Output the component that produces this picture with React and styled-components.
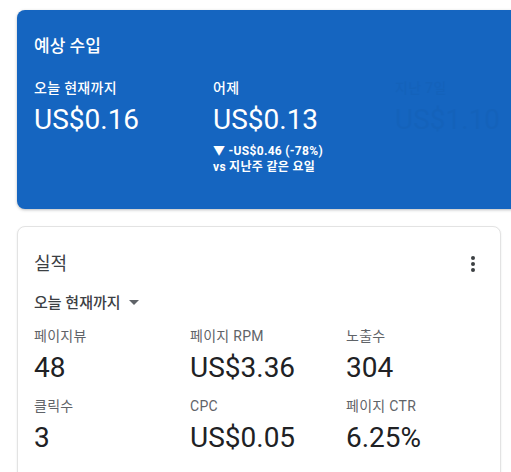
import React from 'react';
import styled, { createGlobalStyle } from 'styled-components';

const GlobalStyle = createGlobalStyle`
  body {
    margin: 0;
    background: #fff;
    overflow: hidden;
    font-family: Roboto, "Noto Sans CJK KR", sans-serif;
  }
`;

const Page = styled.div`
  padding: 10px 10px 0 17px;
  display: flex;
  flex-direction: column;
  gap: 17px;
`;

const EarningsCard = styled.section`
  background: #1565c0;
  border-radius: 8px 0 0 8px;
  margin-right: -20px;
  height: 199px;
  box-sizing: border-box;
  padding: 24px 17px 0;
  color: #fff;
  box-shadow: 0 1px 3px rgba(60, 64, 67, 0.35);
`;

const CardTitle = styled.h2`
  margin: 0;
  line-height: 24px;
  color: ${(p) => (p.$light ? '#fff' : '#3c4043')};
  font-size: ${(p) => (p.$light ? '17px' : '18px')};
  font-weight: ${(p) => (p.$light ? 500 : 400)};
`;

const EarningsRow = styled.div`
  display: grid;
  grid-template-columns: 179px 182px 1fr;
  margin-top: 20px;
`;

const EarningsCol = styled.div`
  display: flex;
  flex-direction: column;
  opacity: ${(p) => (p.$ghost ? 0.025 : 1)};
  color: ${(p) => (p.$ghost ? '#000' : '#fff')};
`;

const EarnLabel = styled.div`
  font-size: 14px;
  font-weight: 500;
  line-height: 20px;
  letter-spacing: 0.3px;
`;

const EarnValue = styled.div`
  font-size: 28px;
  line-height: 36px;
  font-weight: 400;
  margin-top: 4px;
`;

const Change = styled.div`
  font-size: 12px;
  font-weight: 700;
  line-height: 16px;
  margin-top: 5px;
  letter-spacing: 0.3px;
`;

const PerfCard = styled.section`
  background: #fff;
  border: 1px solid #e3e3e3;
  border-radius: 8px;
  box-shadow: 0 1px 2px rgba(60, 64, 67, 0.12);
  padding: 25px 16px 30px;
  box-sizing: border-box;
  height: 260px;
`;

const Header = styled.div`
  display: flex;
  justify-content: space-between;
  align-items: center;
`;

const Kebab = styled.button`
  border: none;
  background: none;
  padding: 0;
  margin-right: 9px;
  display: flex;
  color: #3c4043;
`;

const Dropdown = styled.div`
  display: flex;
  align-items: center;
  gap: 8px;
  margin-top: 17px;
  font-size: 15px;
  font-weight: 500;
  line-height: 20px;
  color: #3c4043;
`;

const Caret = styled.span`
  width: 0;
  height: 0;
  border-left: 5px solid transparent;
  border-right: 5px solid transparent;
  border-top: 5px solid #5f6368;
  margin-top: -2px;
`;

const MetricsGrid = styled.div`
  display: grid;
  grid-template-columns: 156px 156px 1fr;
  row-gap: 11px;
  margin-top: 14px;
`;

const Metric = styled.div`
  display: flex;
  flex-direction: column;
`;

const MetricLabel = styled.div`
  font-size: 14px;
  line-height: 18px;
  color: #5f6368;
  letter-spacing: 0.3px;
`;

const MetricValue = styled.div`
  font-size: 28px;
  line-height: 36px;
  color: #202124;
  margin-top: 5px;
`;

const metrics = [
  ['페이지뷰', '48'],
  ['페이지 RPM', 'US$3.36'],
  ['노출수', '304'],
  ['클릭수', '3'],
  ['CPC', 'US$0.05'],
  ['페이지 CTR', '6.25%'],
];

export default function App() {
  return (
    <>
      <GlobalStyle />
      <Page>
        <EarningsCard>
          <CardTitle $light>예상 수입</CardTitle>
          <EarningsRow>
            <EarningsCol>
              <EarnLabel>오늘 현재까지</EarnLabel>
              <EarnValue>US$0.16</EarnValue>
            </EarningsCol>
            <EarningsCol>
              <EarnLabel>어제</EarnLabel>
              <EarnValue>US$0.13</EarnValue>
              <Change>
                ▼ -US$0.46 (-78%)
                <br />
                vs 지난주 같은 요일
              </Change>
            </EarningsCol>
            <EarningsCol $ghost>
              <EarnLabel>지난 7일</EarnLabel>
              <EarnValue>US$1.10</EarnValue>
            </EarningsCol>
          </EarningsRow>
        </EarningsCard>

        <PerfCard>
          <Header>
            <CardTitle>실적</CardTitle>
            <Kebab aria-label="더보기">
              <svg width="4" height="16" viewBox="0 0 4 16">
                <circle cx="2" cy="2" r="2" fill="currentColor" />
                <circle cx="2" cy="8" r="2" fill="currentColor" />
                <circle cx="2" cy="14" r="2" fill="currentColor" />
              </svg>
            </Kebab>
          </Header>
          <Dropdown>
            오늘 현재까지 <Caret />
          </Dropdown>
          <MetricsGrid>
            {metrics.map(([label, value]) => (
              <Metric key={label}>
                <MetricLabel>{label}</MetricLabel>
                <MetricValue>{value}</MetricValue>
              </Metric>
            ))}
          </MetricsGrid>
        </PerfCard>
      </Page>
    </>
  );
}
